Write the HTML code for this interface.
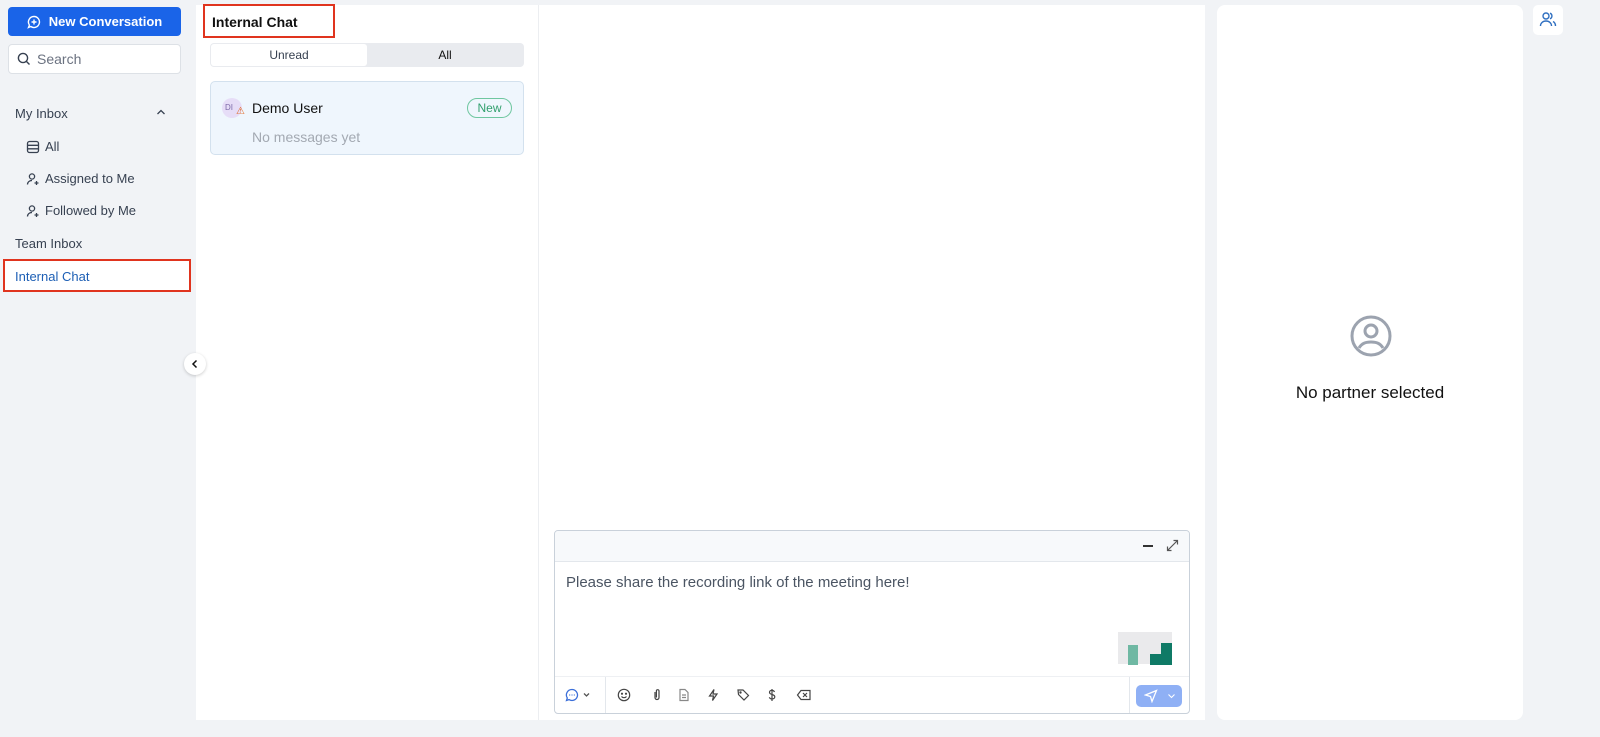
<!DOCTYPE html>
<html><head><style>
*{box-sizing:border-box;margin:0;padding:0}
body{width:1600px;height:737px;background:#f1f3f6;font-family:"Liberation Sans",sans-serif;position:relative;overflow:hidden;color:#1f2937}
.abs{position:absolute}
.btn{left:8px;top:7px;width:173px;height:29px;background:#1a64e8;border-radius:4px;color:#fff;font-weight:bold;font-size:13px;display:flex;align-items:center;justify-content:center;gap:8px}
.search{left:8px;top:44px;width:173px;height:30px;background:#fff;border:1px solid #dde1e6;border-radius:4px;font-size:14px;color:#6b7280;display:flex;align-items:center;padding-left:8px;gap:6px}
.nav{font-size:13px;color:#374151}
.sub{display:flex;align-items:center;gap:5px}
</style></head><body>
<div class="abs btn"><svg width="14" height="14" viewBox="0 0 14 14" fill="none" stroke="#fff" stroke-width="1.4"><path d="M7 1.5a5.5 5.5 0 1 1-3.2 10L1.5 12.5l.9-2.4A5.5 5.5 0 0 1 7 1.5z"/><path d="M7 4.5v5M4.5 7h5"/></svg>New Conversation</div>
<div class="abs search"><svg width="14" height="14" viewBox="0 0 14 14" fill="none" stroke="#374151" stroke-width="1.4"><circle cx="6" cy="6" r="4.6"/><path d="M9.5 9.5l3 3"/></svg>Search</div>
<div class="abs nav" style="left:15px;top:106px">My Inbox</div>
<svg class="abs" style="left:156px;top:108px" width="10" height="8" viewBox="0 0 10 8" fill="none" stroke="#374151" stroke-width="1.3"><path d="M1.5 6l3.5-3.5L8.5 6"/></svg>
<div class="abs nav sub" style="left:26px;top:139px"><svg width="14" height="14" viewBox="0 0 14 14" fill="none" stroke="#374151" stroke-width="1.3"><rect x="1.5" y="1.5" width="11" height="11" rx="2"/><path d="M1.5 5.3h11M1.5 8.8h11"/></svg>All</div>
<div class="abs nav sub" style="left:26px;top:171px"><svg width="14" height="14" viewBox="0 0 14 14" fill="none" stroke="#374151" stroke-width="1.3"><circle cx="6" cy="4.5" r="2.6"/><path d="M1.5 12.5c0-2.5 2-4 4.5-4M10.5 9v4M8.5 11h4"/></svg>Assigned to Me</div>
<div class="abs nav sub" style="left:26px;top:203px"><svg width="14" height="14" viewBox="0 0 14 14" fill="none" stroke="#374151" stroke-width="1.3"><circle cx="6" cy="4.5" r="2.6"/><path d="M1.5 12.5c0-2.5 2-4 4.5-4M10.5 9v4M8.5 11h4"/></svg>Followed by Me</div>
<div class="abs nav" style="left:15px;top:236px">Team Inbox</div>
<div class="abs" style="left:3px;top:259px;width:188px;height:33px;background:#fff;border:2px solid #e0341e"></div>
<div class="abs" style="left:15px;top:269px;font-size:13px;color:#1d5fb5">Internal Chat</div>

<div class="abs" style="left:196px;top:5px;width:1009px;height:715px;background:#fff"></div>
<div class="abs" style="left:184px;top:353px;width:22px;height:22px;border-radius:50%;background:#fff;box-shadow:0 1px 3px rgba(0,0,0,.2);display:flex;align-items:center;justify-content:center"><svg width="8" height="10" viewBox="0 0 8 10" fill="none" stroke="#111" stroke-width="1.5"><path d="M5.5 1.5L2 5l3.5 3.5"/></svg></div>
<div class="abs" style="left:538px;top:5px;width:1px;height:715px;background:#eceef1"></div>
<div class="abs" style="left:203px;top:4px;width:132px;height:34px;border:2px solid #e0341e"></div>
<div class="abs" style="left:212px;top:14px;font-size:14px;font-weight:bold;color:#111">Internal Chat</div>
<div class="abs" style="left:210px;top:43px;width:314px;height:24px;background:#e9ebef;border-radius:4px"></div>
<div class="abs" style="left:211px;top:44px;width:156px;height:22px;background:#fff;border-radius:3px;font-size:12px;color:#374151;text-align:center;line-height:22px">Unread</div>
<div class="abs" style="left:367px;top:44px;width:156px;height:22px;font-size:12px;color:#111;text-align:center;line-height:22px">All</div>
<div class="abs" style="left:210px;top:81px;width:314px;height:74px;background:#eff6fd;border:1px solid #d3e1ee;border-radius:5px"></div>
<div class="abs" style="left:222px;top:98px;width:20px;height:20px;border-radius:50%;background:#e6ddf7;font-size:8px;color:#7c6aa8;line-height:20px;padding-left:3px">DI</div>
<div class="abs" style="left:236px;top:106px;font-size:10px;color:#e0641e">⚠</div>
<div class="abs" style="left:252px;top:100px;font-size:14px;color:#111">Demo User</div>
<div class="abs" style="left:467px;top:98px;width:45px;height:20px;border:1px solid #6fc7a0;border-radius:10px;font-size:12px;color:#32a06e;text-align:center;line-height:18px">New</div>
<div class="abs" style="left:252px;top:129px;font-size:14px;color:#a3a9b2">No messages yet</div>

<div class="abs" style="left:554px;top:530px;width:636px;height:184px;border:1px solid #c9d1da;border-radius:4px;background:#fff;overflow:hidden">
<div style="height:31px;background:#f7f9fb;border-bottom:1px solid #e3e7ec;position:relative">
<div class="abs" style="left:588px;top:14px;width:10px;height:2px;background:#333"></div>
<svg class="abs" style="left:611px;top:8px" width="13" height="13" viewBox="0 0 13 13" fill="none" stroke="#555" stroke-width="1.2"><path d="M1.5 11.5l10-10M7.5 1.5h4v4M1.5 7.5v4h4"/></svg></div>
<div style="padding:12px 11px;font-size:15px;color:#4b5563">Please share the recording link of the meeting here!</div>
<div class="abs" style="left:0;top:145px;width:636px;height:1px;background:#eef0f3"></div>
<div class="abs" style="left:50px;top:146px;width:1px;height:38px;background:#e3e7ec"></div>
<div class="abs" style="left:574px;top:146px;width:1px;height:38px;background:#e3e7ec"></div>
<svg class="abs" style="left:10px;top:157px" width="30" height="14" viewBox="0 0 30 14" fill="none" stroke-width="1.3"><path stroke="#3b6fd9" d="M7 1.5a5.5 5.5 0 1 1-3 10.1L1.5 12.5l.8-2.5A5.5 5.5 0 0 1 7 1.5z"/><circle cx="4.7" cy="7" r=".6" fill="#3b6fd9" stroke="none"/><circle cx="7" cy="7" r=".6" fill="#3b6fd9" stroke="none"/><circle cx="9.3" cy="7" r=".6" fill="#3b6fd9" stroke="none"/><path stroke="#555" d="M19 5.5l2.5 2.5 2.5-2.5"/></svg>
<svg class="abs" style="left:62px;top:157px" width="260" height="14" viewBox="0 0 260 14" fill="none" stroke="#444" stroke-width="1.2">
<circle cx="7" cy="7" r="5.7"/><circle cx="5" cy="5.7" r=".5" fill="#444"/><circle cx="9" cy="5.7" r=".5" fill="#444"/><path d="M4.5 8.5c1.3 1.6 3.7 1.6 5 0"/>
<path d="M38 4v5.5a2 2 0 0 0 4 0V3a1.3 1.3 0 0 0-2.6 0v6.5" />
<path d="M63 1.5h5l3 3v8h-8z M65 7h4M65 9.5h4" stroke="#888"/>
<path d="M97 1.5l-4.5 6.5h4l-1 4.5 4.5-6.5h-4z"/>
<path d="M121 2h5l5.5 5.5-4.5 4.5-5.5-5.5z"/><circle cx="123.5" cy="4.5" r=".6" fill="#444"/>
<path d="M155 1v12M157.5 4c-.5-1.2-1.5-1.7-2.5-1.7-1.5 0-2.5.9-2.5 2s1 1.8 2.5 2.2 2.8 1 2.8 2.3-1.2 2.2-2.8 2.2c-1.3 0-2.3-.7-2.7-1.7"/>
<path d="M184 2.5h9v9h-9l-3.5-4.5z M186 5l4 4M190 5l-4 4"/>
</svg>
<div class="abs" style="left:581px;top:154px;width:46px;height:22px;background:#8fb0f5;border-radius:5px"></div>
<svg class="abs" style="left:589px;top:158px" width="14" height="14" viewBox="0 0 14 14" fill="none" stroke="#fff" stroke-width="1.3"><path d="M12.5 1.5L1.5 6l5 1.5 1.5 5z"/></svg>
<svg class="abs" style="left:612px;top:161px" width="9" height="8" viewBox="0 0 9 8" fill="none" stroke="#fff" stroke-width="1.1"><path d="M1.5 2.5l3 3 3-3"/></svg>
</div>
<div class="abs" style="left:1118px;top:632px;width:54px;height:32px;background:#eaeaec"></div>
<div class="abs" style="left:1128px;top:645px;width:10px;height:20px;background:#6fb8a3"></div>
<div class="abs" style="left:1161px;top:643px;width:11px;height:22px;background:#0f7a66"></div>
<div class="abs" style="left:1150px;top:654px;width:11px;height:11px;background:#0f7a66"></div>

<div class="abs" style="left:1217px;top:5px;width:306px;height:715px;background:#fff;border-radius:8px"></div>
<svg class="abs" style="left:1349px;top:314px" width="44" height="44" viewBox="0 0 44 44" fill="none" stroke="#9ca3af" stroke-width="3"><circle cx="22" cy="22" r="19"/><circle cx="22" cy="17" r="6"/><path d="M10 34c3-5 7-6 12-6s9 1 12 6"/></svg>
<div class="abs" style="left:1217px;top:383px;width:306px;text-align:center;font-size:17px;color:#111">No partner selected</div>
<div class="abs" style="left:1533px;top:5px;width:30px;height:30px;background:#fff;border-radius:5px"></div>
<svg class="abs" style="left:1539px;top:11px" width="18" height="18" viewBox="0 0 18 18" fill="none" stroke="#2f6fc0" stroke-width="1.4"><circle cx="7" cy="5" r="3"/><path d="M1.5 15c0-3 2.5-5 5.5-5s5.5 2 5.5 5M11 2.2a3 3 0 0 1 0 5.6M14 10.5c1.5.8 2.5 2.5 2.5 4.5"/></svg>
</body></html>
